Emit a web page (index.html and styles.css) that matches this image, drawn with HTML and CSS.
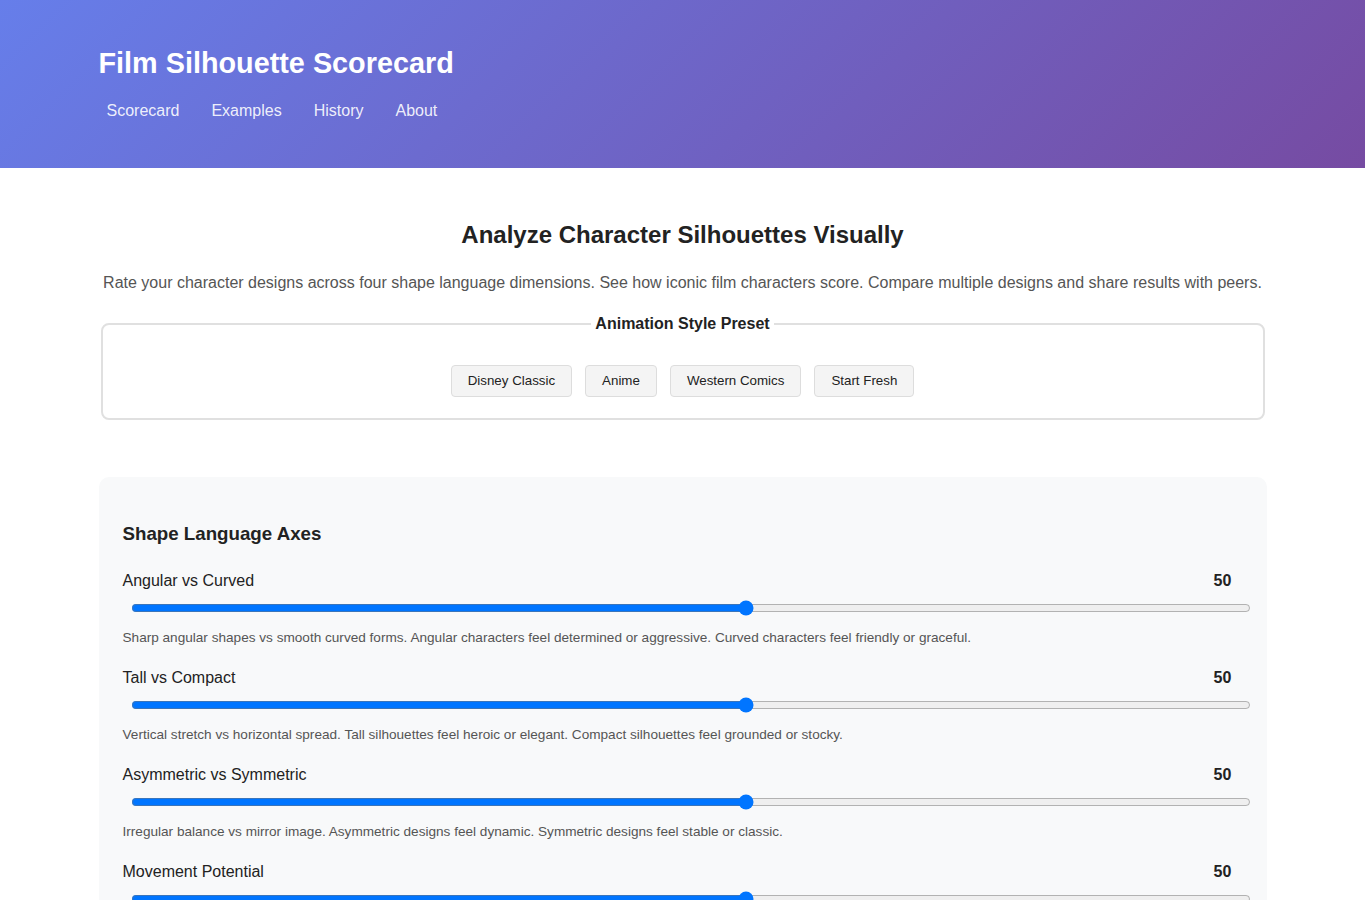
FILE: index.html
```html
<!DOCTYPE html>
<html lang="en">
<head>
  <meta charset="UTF-8">
  <title>Film Silhouette Scorecard</title>
  <link rel="stylesheet" href="styles.css">
</head>
<body>

<header class="site-header">
  <div class="container">
    <h1>Film Silhouette Scorecard</h1>
    <nav class="main-nav">
      <a href="#">Scorecard</a>
      <a href="#">Examples</a>
      <a href="#">History</a>
      <a href="#">About</a>
    </nav>
  </div>
</header>

<main class="container">
  <section class="intro">
    <h2>Analyze Character Silhouettes Visually</h2>
    <p>Rate your character designs across four shape language dimensions. See how iconic film characters score. Compare multiple designs and share results with peers.</p>

    <fieldset class="presets">
      <legend>Animation Style Preset</legend>
      <div class="preset-buttons">
        <button>Disney Classic</button>
        <button>Anime</button>
        <button>Western Comics</button>
        <button>Start Fresh</button>
      </div>
    </fieldset>
  </section>

  <section class="card">
    <h3>Shape Language Axes</h3>

    <div class="axis">
      <div class="axis-head">
        <label for="angular">Angular vs Curved</label>
        <span class="axis-value">50</span>
      </div>
      <input type="range" id="angular" min="0" max="100" value="55">
      <p class="axis-desc">Sharp angular shapes vs smooth curved forms. Angular characters feel determined or aggressive. Curved characters feel friendly or graceful.</p>
    </div>

    <div class="axis">
      <div class="axis-head">
        <label for="tall">Tall vs Compact</label>
        <span class="axis-value">50</span>
      </div>
      <input type="range" id="tall" min="0" max="100" value="55">
      <p class="axis-desc">Vertical stretch vs horizontal spread. Tall silhouettes feel heroic or elegant. Compact silhouettes feel grounded or stocky.</p>
    </div>

    <div class="axis">
      <div class="axis-head">
        <label for="symmetry">Asymmetric vs Symmetric</label>
        <span class="axis-value">50</span>
      </div>
      <input type="range" id="symmetry" min="0" max="100" value="55">
      <p class="axis-desc">Irregular balance vs mirror image. Asymmetric designs feel dynamic. Symmetric designs feel stable or classic.</p>
    </div>

    <div class="axis">
      <div class="axis-head">
        <label for="movement">Movement Potential</label>
        <span class="axis-value">50</span>
      </div>
      <input type="range" id="movement" min="0" max="100" value="55">
      <p class="axis-desc">Static pose vs implied motion. Characters with strong lines of action read clearly even in still frames.</p>
    </div>
  </section>
</main>

</body>
</html>
```

FILE: styles.css
```css
body {
  margin: 0;
  font-family: "Liberation Sans", Arial, sans-serif;
  color: #333;
  background: #fff;
}

.container {
  max-width: 1200px;
  margin: 0 auto;
  padding: 0 16px;
  box-sizing: border-box;
}

/* Header */
.site-header {
  background: linear-gradient(135deg, #667eea 0%, #764ba2 100%);
  color: #fff;
  padding: 47px 0 40px;
}

.site-header h1 {
  margin: 0;
  font-size: 28.8px;
  line-height: 32px;
}

.main-nav {
  display: flex;
  gap: 16px;
  margin-top: 15px;
}

.main-nav a {
  color: rgba(255, 255, 255, 0.9);
  text-decoration: none;
  font-size: 16px;
  line-height: 18px;
  padding: 8px;
}

/* Intro */
.intro {
  text-align: center;
  padding-top: 53px;
}

.intro h2 {
  margin: 0;
  font-size: 24px;
  line-height: 28px;
  color: #222;
}

.intro p {
  margin: 25px 0 0;
  font-size: 16px;
  line-height: 18px;
  color: #555;
}

.presets {
  margin: 23px 2px 0;
  border: 2px solid #e0e0e0;
  border-radius: 8px;
  padding: 32px 16px 21px;
}

.presets legend {
  margin: 0 auto;
  padding: 0 4px;
  font-weight: bold;
  font-size: 16px;
  line-height: 18px;
  color: #222;
}

.preset-buttons {
  display: flex;
  justify-content: center;
  gap: 13px;
}

.preset-buttons button {
  font-family: inherit;
  font-size: 13.33px;
  line-height: 16px;
  padding: 7px 16px;
  background: #f4f4f4;
  border: 1px solid #ddd;
  border-radius: 4px;
  color: #222;
  cursor: pointer;
}

/* Axes card */
.card {
  margin-top: 57px;
  background: #f8f9fa;
  border-radius: 10px;
  padding: 46px 24px 24px;
}

.card h3 {
  margin: 0 0 27px;
  font-size: 18.72px;
  line-height: 22px;
  color: #222;
}

.axis {
  margin-bottom: 23px;
}

.axis-head {
  display: flex;
  justify-content: space-between;
  font-size: 16px;
  line-height: 18px;
  color: #222;
}

.axis-value {
  width: 40px;
  text-align: center;
  font-weight: bold;
}

.axis input[type="range"] {
  display: block;
  width: 100%;
  height: 16px;
  margin: 10px 0 14px 8px;
}

.axis-desc {
  margin: 0;
  font-size: 13.6px;
  line-height: 16px;
  color: #555;
}
```
